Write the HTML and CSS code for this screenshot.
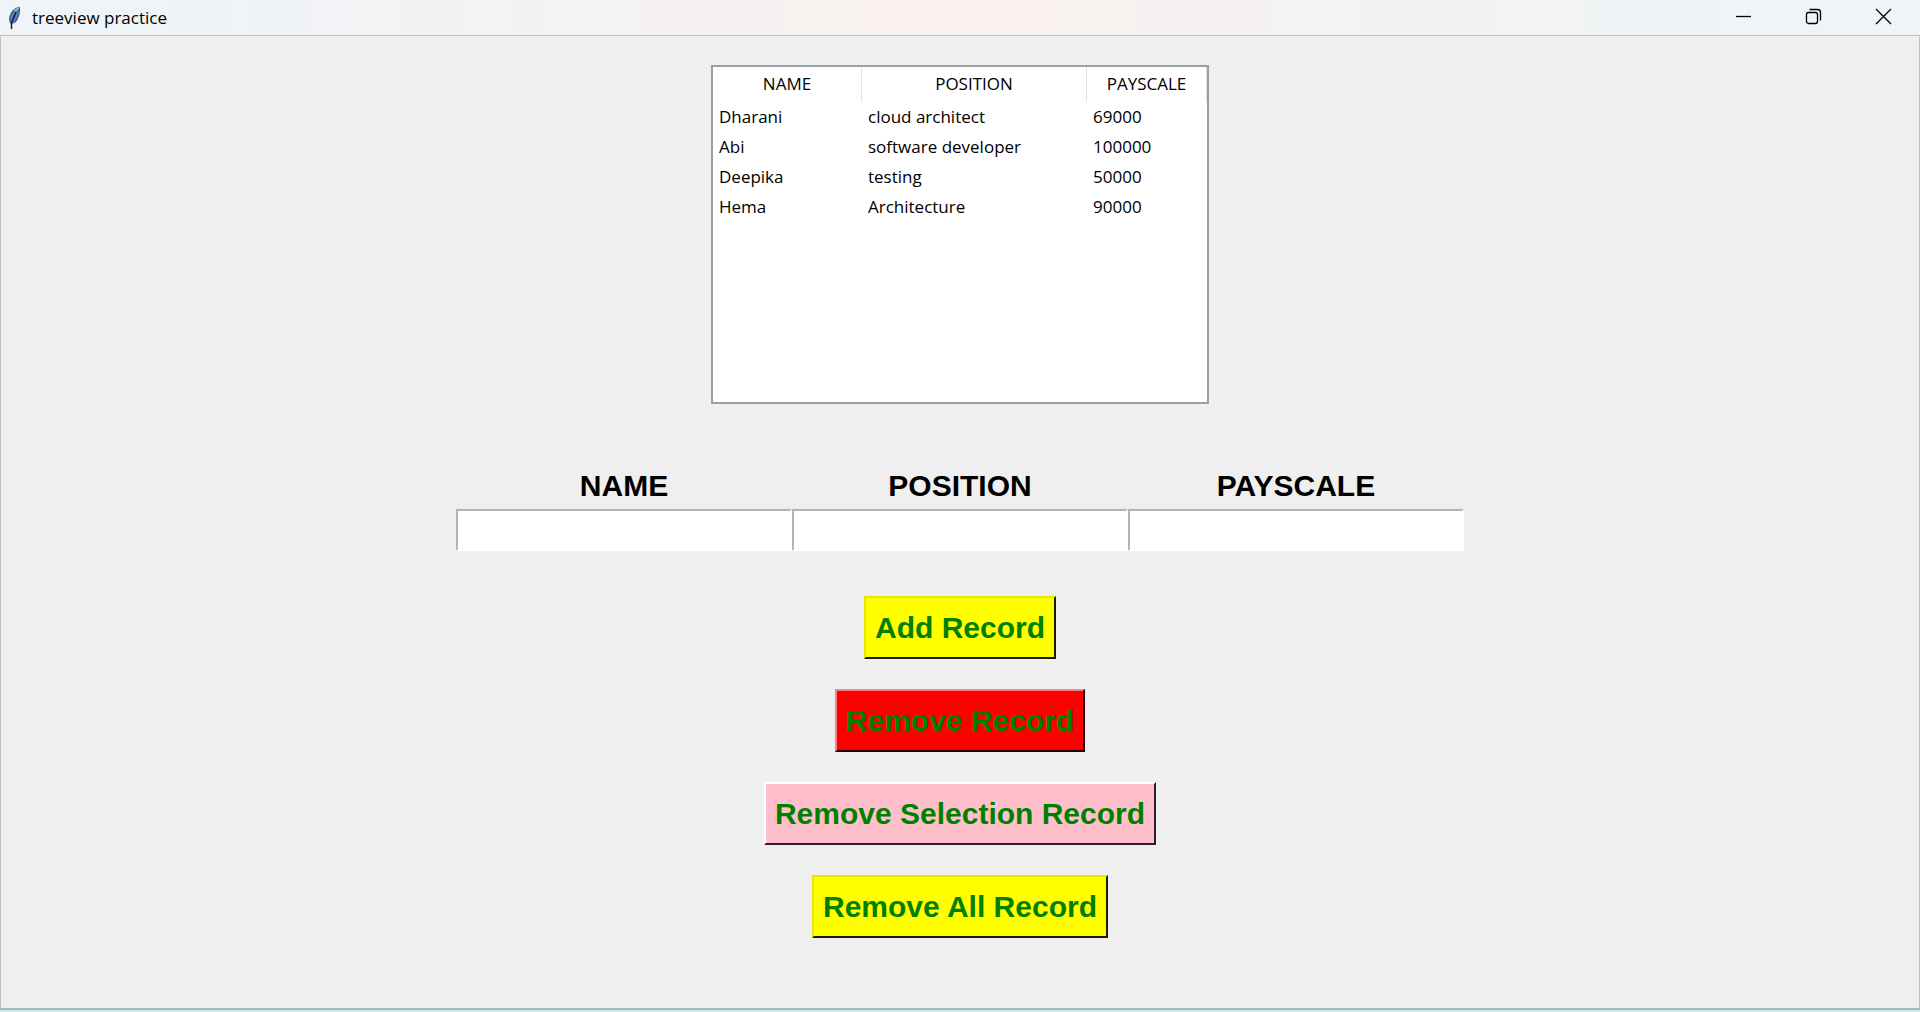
FILE: index.html
```html
<!DOCTYPE html>
<html lang="en">
<head>
<meta charset="utf-8">
<title>treeview practice</title>
<link rel="stylesheet" href="styles.css">
</head>
<body>
<div class="window">
  <header class="titlebar">
    <svg class="feather" width="14" height="24" viewBox="0 0 14 24" aria-hidden="true">
      <path d="M4.500 23L4 18C.5 14 2 9 6 4Q9 1 12.500 .8C14 3 13 11 9 16L5 18Z" fill="#555b64"/>
      <path d="M3.500 16C2.500 11 5 7 8 4L11.500 2C12.500 6 11 11 8 15L5 17Z" fill="#4486cf"/>
      <path d="M4.500 23V17L9 6" fill="none" stroke="#17202c" stroke-width="1.500"/>
      <path d="M7.500 5L11.500 2" stroke="#bcc5ce" stroke-width="1.500"/>
    </svg>
    <h1 class="title">treeview practice</h1>
    <div class="controls">
      <button class="control" type="button" aria-label="Minimize">
        <svg width="17" height="17" viewBox="0 0 17 17"><path d="M1 8.500H16"/></svg>
      </button>
      <button class="control" type="button" aria-label="Restore">
        <svg width="17" height="17" viewBox="0 0 17 17"><rect x="1.500" y="4.500" width="11" height="11" rx="2"/><path d="M4.500 1.500H12.500Q15.500 1.500 15.500 4.500V12.500"/></svg>
      </button>
      <button class="control" type="button" aria-label="Close">
        <svg width="17" height="17" viewBox="0 0 17 17"><path d="M1 1L16 16M16 1L1 16"/></svg>
      </button>
    </div>
  </header>
  <main class="content">
    <div class="tree">
      <table class="records">
        <colgroup><col class="col-name"><col class="col-position"><col class="col-pay"></colgroup>
        <thead>
          <tr><th>NAME</th><th>POSITION</th><th>PAYSCALE</th></tr>
        </thead>
        <tbody>
          <tr><td>Dharani</td><td>cloud architect</td><td>69000</td></tr>
          <tr><td>Abi</td><td>software developer</td><td>100000</td></tr>
          <tr><td>Deepika</td><td>testing</td><td>50000</td></tr>
          <tr><td>Hema</td><td>Architecture</td><td>90000</td></tr>
        </tbody>
      </table>
    </div>
    <form class="form">
      <div class="fields">
        <div class="field"><label for="name">NAME</label><input id="name" type="text"></div>
        <div class="field"><label for="position">POSITION</label><input id="position" type="text"></div>
        <div class="field"><label for="payscale">PAYSCALE</label><input id="payscale" type="text"></div>
      </div>
      <div class="actions">
        <button class="action yellow" type="button">Add Record</button>
        <button class="action red" type="button">Remove Record</button>
        <button class="action pink" type="button">Remove Selection Record</button>
        <button class="action yellow" type="button">Remove All Record</button>
      </div>
    </form>
  </main>
</div>
</body>
</html>
```
FILE: styles.css
```css
* {
  box-sizing: border-box;
}

body {
  margin: 0;
  background: #cde7eb;
  color: #000;
  font-family: "Open Sans", "Noto Sans", sans-serif;
}

.window {
  display: flex;
  flex-direction: column;
  min-height: 100vh;
  border-bottom: 2px solid #cde7eb;
}

.titlebar {
  display: flex;
  align-items: center;
  height: 35px;
  padding: 0 2px 0 7px;
  background: linear-gradient(90deg, #eff4f8 8%, #f8f1f0 45%, #f8f1f0 55%, #eff4f6 90%);
}

.feather {
  margin-right: 11px;
}

.title {
  flex: 1;
  margin: 0;
  font-size: 17px;
  font-weight: 400;
  line-height: 24px;
}

.controls {
  display: flex;
}

.control {
  display: flex;
  align-items: center;
  justify-content: center;
  width: 70px;
  height: 35px;
  padding: 0 0 2px;
  border: 0;
  background: none;
}

.control svg {
  fill: none;
  stroke: #000;
  stroke-width: 1.3;
}

.content {
  display: flex;
  flex: 1;
  flex-direction: column;
  align-items: center;
  padding: 29px 16px;
  border: 1px solid #c2c2c2;
  border-bottom: 2px solid #a5b8bb;
  background: #efefef;
}

.tree {
  width: 498px;
  max-width: 100%;
  min-height: 339px;
  border: 2px solid #999fa5;
  background: #fff;
}

.records {
  width: 100%;
  table-layout: fixed;
  border-collapse: separate;
  border-spacing: 0;
  font-size: 17px;
  line-height: 30px;
}

.col-name {
  width: 149px;
}

.col-position {
  width: 225px;
}

.records th {
  height: 35px;
  padding: 0 0 2px;
  border-right: 1px solid #e2e2e2;
  font-weight: 400;
}

.records td {
  height: 30px;
  padding: 0 6px;
}

.form {
  display: flex;
  flex-direction: column;
  align-items: center;
  gap: 45px;
  width: 1008px;
  max-width: 100%;
  margin-top: 60px;
  font-family: "Liberation Sans", Arial, sans-serif;
  font-size: 30px;
  font-weight: 700;
}

.fields {
  display: flex;
  width: 100%;
}

.field {
  display: flex;
  flex: 1;
  flex-direction: column;
  min-width: 0;
  text-align: center;
}

.field label {
  padding-bottom: 2px;
  line-height: 43px;
}

.field input {
  width: 100%;
  height: 42px;
  padding: 0 4px;
  border: 2px solid #fff;
  border-top-color: #b4b4b4;
  border-left-color: #b4b4b4;
  background: #fff;
  font: inherit;
}

.actions {
  display: flex;
  flex-direction: column;
  align-items: center;
  gap: 30px;
}

.action {
  height: 63px;
  padding: 0 9px;
  border: 2px solid;
  color: #008000;
  font: inherit;
}

.yellow {
  border-color: #e6e600 #1c1c00 #1c1c00 #e6e600;
  background: #ff0;
}

.red {
  border-color: #ff7f7f #200000 #200000 #ff7f7f;
  background: #f00;
}

.pink {
  border-color: #fff #2c2022 #2c2022 #fff;
  background: #ffc0cb;
}
```
